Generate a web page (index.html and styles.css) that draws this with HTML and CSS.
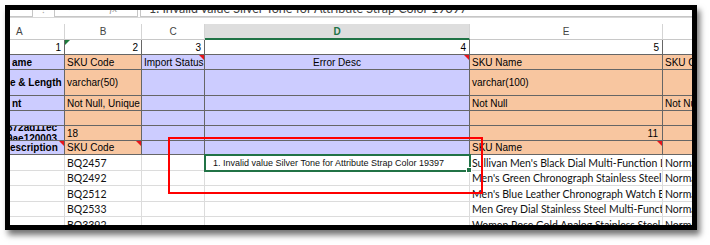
FILE: index.html
```html
<!DOCTYPE html>
<html>
<head>
<meta charset="utf-8">
<link rel="stylesheet" href="styles.css">
</head>
<body>
<div class="frame">
  <div class="fbar">
    <div class="namebox"></div>
    <div class="fb-dots"><span>⁝</span></div>
    <div class="fb-icons"><span>✕</span><span>✓</span><span class="fx">fx</span></div>
    <div class="fb-formula"><span>1. Invalid value Silver Tone for Attribute Strap Color 19397</span></div>
  </div>
  <div class="sheet">
    <!-- column headers -->
    <div class="c hd hd-a">A</div>
    <div class="c hd">B</div>
    <div class="c hd">C</div>
    <div class="c hd hd-sel">D</div>
    <div class="c hd">E</div>
    <div class="c hd last"></div>
    <!-- row 1 numbers -->
    <div class="c num">1</div>
    <div class="c num tri-g">2</div>
    <div class="c num">3</div>
    <div class="c num">4</div>
    <div class="c num">5</div>
    <div class="c num last"></div>
    <!-- name row -->
    <div class="c pu lbl">ame</div>
    <div class="c or">SKU Code</div>
    <div class="c pu tri-r">Import Status</div>
    <div class="c pu center tri-r">Error Desc</div>
    <div class="c or">SKU Name</div>
    <div class="c or last">SKU Code</div>
    <!-- data type row -->
    <div class="c pu lbl cut">e &amp; Length</div>
    <div class="c or">varchar(50)</div>
    <div class="c pu"></div>
    <div class="c pu"></div>
    <div class="c or">varchar(100)</div>
    <div class="c or last"></div>
    <!-- constraint row -->
    <div class="c pu lbl">nt</div>
    <div class="c or">Not Null, Unique</div>
    <div class="c pu"></div>
    <div class="c pu"></div>
    <div class="c or">Not Null</div>
    <div class="c or last">Not Null</div>
    <!-- empty row -->
    <div class="c pu"></div>
    <div class="c or"></div>
    <div class="c pu"></div>
    <div class="c pu"></div>
    <div class="c or"></div>
    <div class="c or last"></div>
    <!-- id row -->
    <div class="c pu lbl wrap2"><span>672ad11ec</span><span>9ae120003</span></div>
    <div class="c or">18</div>
    <div class="c pu"></div>
    <div class="c pu"></div>
    <div class="c or right">11</div>
    <div class="c or last"></div>
    <!-- description row -->
    <div class="c pu lbl cut tri-r">escription</div>
    <div class="c or tri-r">SKU Code</div>
    <div class="c pu"></div>
    <div class="c pu"></div>
    <div class="c or tri-r">SKU Name</div>
    <div class="c or last"></div>
    <!-- data rows -->
    <div class="c dt"></div>
    <div class="c dt">BQ2457</div>
    <div class="c dt"></div>
    <div class="c dt err sel">1. Invalid value Silver Tone for Attribute Strap Color 19397</div>
    <div class="c dt">Sullivan Men's Black Dial Multi-Function Leather Watch</div>
    <div class="c dt last">Normal</div>

    <div class="c dt"></div>
    <div class="c dt">BQ2492</div>
    <div class="c dt"></div>
    <div class="c dt"></div>
    <div class="c dt">Men's Green Chronograph Stainless Steel Watch</div>
    <div class="c dt last">Normal</div>

    <div class="c dt"></div>
    <div class="c dt">BQ2512</div>
    <div class="c dt"></div>
    <div class="c dt"></div>
    <div class="c dt">Men's Blue Leather Chronograph Watch BQ2512</div>
    <div class="c dt last">Normal</div>

    <div class="c dt"></div>
    <div class="c dt">BQ2533</div>
    <div class="c dt"></div>
    <div class="c dt"></div>
    <div class="c dt">Men Grey Dial Stainless Steel Multi-Function Watch</div>
    <div class="c dt last">Normal</div>

    <div class="c dt"></div>
    <div class="c dt">BQ3392</div>
    <div class="c dt"></div>
    <div class="c dt"></div>
    <div class="c dt">Women Rose Gold Analog Stainless Steel Watch</div>
    <div class="c dt last">Normal</div>
  </div>
  <div class="annot"></div>
</div>
</body>
</html>
```
FILE: styles.css
```css
* { box-sizing: border-box; }
html, body { margin: 0; padding: 0; background: #fff; }
body {
  width: 710px;
  height: 245px;
  overflow: hidden;
  font-family: "Liberation Sans", Arial, sans-serif;
  color: #000;
}
.frame {
  position: relative;
  margin: 5px 0 0 5px;
  width: 692px;
  height: 225px;
  border: 5px solid #000;
  box-shadow: 3px 5px 6px rgba(0, 0, 0, 0.55);
  overflow: hidden;
  background: #fff;
}

/* formula bar remnant */
.fbar {
  height: 8px;
  display: flex;
  border-bottom: 1px solid #d8d8d8;
  overflow: hidden;
}
.namebox {
  width: 23px;
  border-right: 1px solid #c6c6c6;
  border-bottom: 1px solid #c6c6c6;
}
.fb-dots {
  width: 21px;
  display: flex;
  justify-content: center;
  overflow: hidden;
  font: 10px "Liberation Sans", sans-serif;
  color: #a8a8a8;
}
.fb-dots span { display: block; line-height: 10px; margin-top: -5px; }
.fb-icons {
  width: 84px;
  display: flex;
  gap: 12px;
  padding-left: 12px;
  border: 1px solid #c6c6c6;
  border-top: 0;
  overflow: hidden;
  font: 11px "DejaVu Sans", sans-serif;
  color: #9a9a9a;
}
.fb-icons span { display: block; line-height: 12px; margin-top: -8px; }
.fb-icons .fx { font-style: italic; font-family: "Liberation Serif", serif; }
.fb-formula {
  flex: 1;
  margin-left: 2px;
  border-left: 1px solid #c6c6c6;
  border-bottom: 1px solid #c6c6c6;
  overflow: hidden;
}
.fb-formula span {
  display: block;
  margin-top: -9px;
  padding-left: 8px;
  line-height: 12px;
  font: 12.5px Lato, sans-serif;
  color: #444;
  white-space: nowrap;
}

/* sheet grid */
.sheet {
  margin-top: 6px;
  display: grid;
  grid-template-columns: 55px 77px 63px 265px 193px 29px;
  grid-template-rows: 16px 15px 15px 26px 15px 15px 15px 14px 16px 15px 16px 15px 16px;
}
.c {
  position: relative;
  display: flex;
  align-items: center;
  padding: 0 2px;
  overflow: hidden;
  white-space: nowrap;
  font-size: 10px;
  border-right: 1px solid #666;
  border-bottom: 1px solid #666;
}
.c.last { border-right: 0; }

.hd {
  justify-content: center;
  color: #444;
  font-size: 10px;
  border-right-color: #d4d4d4;
  border-bottom-color: #c8c8c8;
}
.hd-a { justify-content: flex-start; padding-left: 6px; }
.hd-sel {
  background: #dedede;
  color: #217346;
  font-weight: bold;
  border-bottom: 2px solid #217346;
}

.num {
  justify-content: flex-end;
  padding-right: 3px;
  background: #fff;
}

.pu { background: #ccccff; }
.or { background: #f8c6a0; }
.lbl { font-weight: bold; padding-left: 2px; }
.cut { padding-left: 0; }
.center { justify-content: center; }
.right { justify-content: flex-end; padding-right: 4px; }

.wrap2 {
  flex-direction: column;
  align-items: flex-start;
  justify-content: center;
  line-height: 11px;
  padding-left: 0;
}
.wrap2 span { margin-left: -3px; }

.dt {
  font: 10.5px Lato, sans-serif;
  color: #111;
  border-right-color: #dcdcdc;
  border-bottom-color: #dcdcdc;
  background: #fff;
}
.err {
  font: 9px "Liberation Sans", Arial, sans-serif;
  padding-left: 8px;
}
.sel {
  overflow: visible;
  z-index: 2;
  outline: 2px solid #217346;
  outline-offset: -1px;
}
.sel::after {
  content: "";
  position: absolute;
  right: -3px;
  bottom: -3px;
  width: 4px;
  height: 4px;
  background: #217346;
  border: 1px solid #fff;
}

/* comment / error indicators */
.tri-r::before {
  content: "";
  position: absolute;
  top: 0;
  right: 0;
  border-style: solid;
  border-width: 0 5px 5px 0;
  border-color: transparent #e8141b transparent transparent;
}
.tri-g::before {
  content: "";
  position: absolute;
  top: 0;
  left: 0;
  border-style: solid;
  border-width: 5px 5px 0 0;
  border-color: #1e7b3c transparent transparent transparent;
}

/* red annotation box */
.annot {
  position: absolute;
  left: 158px;
  top: 127px;
  width: 315px;
  height: 57px;
  border: 2px solid #ff0000;
  z-index: 5;
  pointer-events: none;
}
```
